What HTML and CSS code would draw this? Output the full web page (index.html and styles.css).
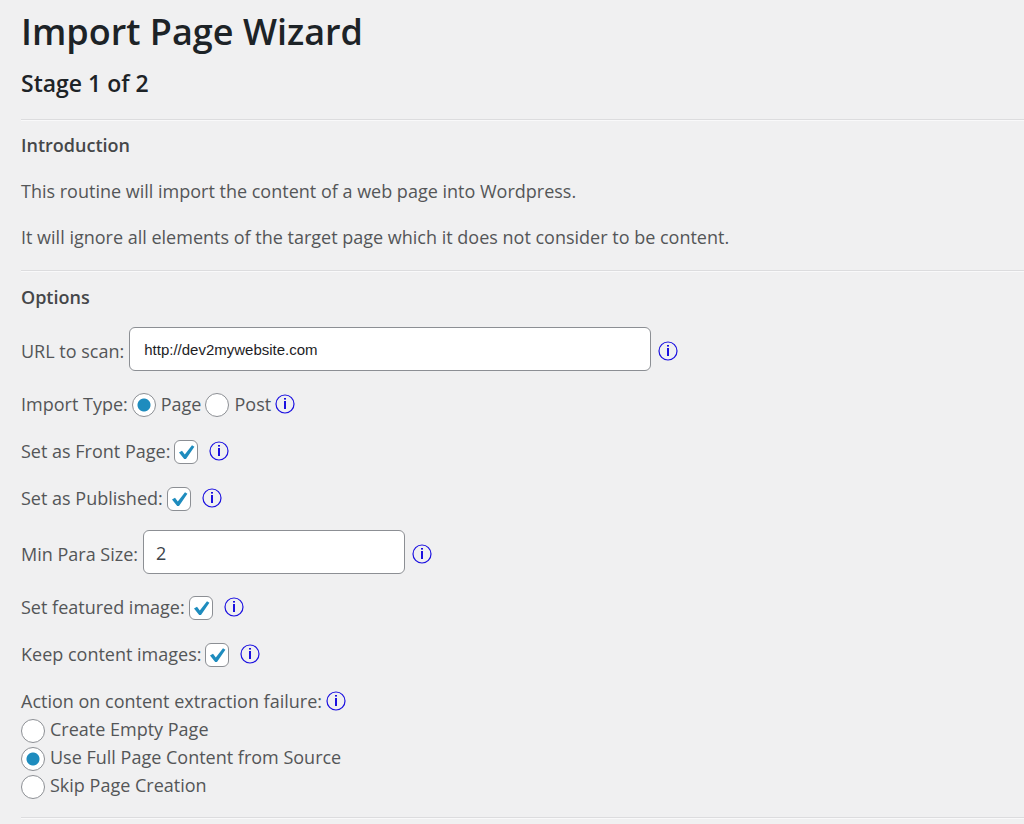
FILE: index.html
```html
<!DOCTYPE html>
<html lang="en">
<head>
<meta charset="utf-8">
<meta name="viewport" content="width=device-width, initial-scale=1">
<title>Import Page Wizard</title>
<link rel="stylesheet" href="styles.css">
</head>
<body>
<svg class="sprite" aria-hidden="true">
  <symbol id="info" viewBox="0 0 20 20">
    <circle cx="10" cy="10" r="9" fill="none" stroke="currentColor" stroke-width="1.2"/>
    <rect x="9" y="7" width="2" height="8" fill="currentColor"/>
    <rect x="9" y="4" width="2" height="1.6" fill="currentColor"/>
  </symbol>
  <symbol id="tick" viewBox="0 0 24 24">
    <path d="M5 12.6 8 10.8 10.8 14.6 18 5.2 20.4 6.8 12 19H10.2Z" fill="currentColor"/>
  </symbol>
</svg>
<main class="wizard">
  <h1 class="title">Import Page Wizard</h1>
  <h2 class="stage">Stage 1 of 2</h2>
  <hr class="rule">
  <section class="intro">
    <h3 class="heading">Introduction</h3>
    <p class="text">This routine will import the content of a web page into Wordpress.</p>
    <p class="text">It will ignore all elements of the target page which it does not consider to be content.</p>
  </section>
  <hr class="rule">
  <form class="options">
    <h3 class="heading">Options</h3>
    <div class="fields">
      <div class="row row-input">
        <label for="url">URL to scan:</label>
        <input class="input input-url" id="url" type="text" value="http://dev2mywebsite.com">
        <a class="info" href="#" aria-label="Help: URL to scan"><svg><use href="#info"/></svg></a>
      </div>
      <div class="row" role="radiogroup" aria-label="Import Type">
        <span>Import Type:</span>
        <label class="choice"><input class="radio" type="radio" name="type" checked>Page</label>
        <label class="choice"><input class="radio" type="radio" name="type">Post</label>
        <a class="info" href="#" aria-label="Help: Import Type"><svg><use href="#info"/></svg></a>
      </div>
      <div class="row row-check">
        <label for="front">Set as Front Page:</label>
        <span class="check"><input class="checkbox" id="front" type="checkbox" checked><svg class="tick"><use href="#tick"/></svg></span>
        <a class="info" href="#" aria-label="Help: Front Page"><svg><use href="#info"/></svg></a>
      </div>
      <div class="row row-check">
        <label for="published">Set as Published:</label>
        <span class="check"><input class="checkbox" id="published" type="checkbox" checked><svg class="tick"><use href="#tick"/></svg></span>
        <a class="info" href="#" aria-label="Help: Published"><svg><use href="#info"/></svg></a>
      </div>
      <div class="row row-input">
        <label for="para">Min Para Size:</label>
        <input class="input input-size" id="para" type="text" inputmode="numeric" value="2">
        <a class="info" href="#" aria-label="Help: Min Para Size"><svg><use href="#info"/></svg></a>
      </div>
      <div class="row row-check">
        <label for="featured">Set featured image:</label>
        <span class="check"><input class="checkbox" id="featured" type="checkbox" checked><svg class="tick"><use href="#tick"/></svg></span>
        <a class="info" href="#" aria-label="Help: featured image"><svg><use href="#info"/></svg></a>
      </div>
      <div class="row row-check">
        <label for="keep">Keep content images:</label>
        <span class="check"><input class="checkbox" id="keep" type="checkbox" checked><svg class="tick"><use href="#tick"/></svg></span>
        <a class="info" href="#" aria-label="Help: content images"><svg><use href="#info"/></svg></a>
      </div>
      <div class="failure" role="radiogroup" aria-label="Action on content extraction failure">
        <div class="row">
          <span>Action on content extraction failure:</span>
          <a class="info" href="#" aria-label="Help: extraction failure"><svg><use href="#info"/></svg></a>
        </div>
        <label class="choice"><input class="radio" type="radio" name="failure">Create Empty Page</label>
        <label class="choice"><input class="radio" type="radio" name="failure" checked>Use Full Page Content from Source</label>
        <label class="choice"><input class="radio" type="radio" name="failure">Skip Page Creation</label>
      </div>
    </div>
  </form>
  <hr class="rule">
</main>
</body>
</html>
```
FILE: styles.css
```css
* { box-sizing: border-box; }

body {
  margin: 0;
  background: #f0f0f1;
  color: #545658;
  font: 18px/28px "Open Sans", "Noto Sans", sans-serif;
}

.sprite { display: none; }
.wizard { padding: 8px 0 4px 21px; }

.title {
  margin: 0;
  color: #1d2327;
  font-size: 36px;
  font-weight: 600;
  line-height: 48px;
}

.stage {
  margin: 12px 0 20px;
  color: #1d2327;
  font-size: 23px;
  font-weight: 600;
  line-height: 31px;
}

.rule {
  height: 2px;
  margin: 0;
  border: 0;
  border-top: 1px solid #dcdcde;
  border-bottom: 1px solid #f9f9fa;
}

.heading {
  margin: 0;
  color: #454749;
  font-size: 18px;
  font-weight: 600;
}

.intro {
  display: grid;
  gap: 18px;
  padding: 10px 0 19px;
}

.text { margin: 0; }

.options {
  display: grid;
  gap: 16px;
  padding: 11px 0 18px;
}

.fields { display: grid; gap: 18px; }

.row {
  display: flex;
  align-items: center;
  gap: 4px;
  min-height: 29px;
}

.row-input { gap: 5px; }
.row-input label { padding-top: 4px; }
.row-input .info { margin: 4px 0 0 2px; }
.row-check .info { margin-left: 7px; }

.choice {
  display: flex;
  align-items: center;
  gap: 5px;
}

.failure .choice { min-height: 28px; }

.input {
  height: 44px;
  padding: 0 14px;
  border: 1px solid #8c8f94;
  border-radius: 6px;
  background: #fff;
}

.input-url {
  width: 522px;
  color: #1d1d1f;
  font: 15px "Liberation Sans", Arial, sans-serif;
}

.input-size {
  width: 262px;
  padding: 2px 12px 0;
  color: #3c434a;
  font: 18px "Open Sans", "Noto Sans", sans-serif;
}

.radio,
.checkbox {
  appearance: none;
  flex: none;
  width: 24px;
  height: 24px;
  margin: 0;
  border: 1px solid #8c8f94;
  background: #fff;
}

.radio {
  margin-top: 3px;
  border-radius: 50%;
}

.radio:checked {
  background: radial-gradient(circle, #1e8cbe 0 6px, #fff 7px);
}

.checkbox { display: block; border-radius: 6px; }

.check {
  position: relative;
  margin-top: 3px;
}

.tick {
  position: absolute;
  inset: 0;
  width: 24px;
  height: 24px;
  color: #1e8cbe;
  pointer-events: none;
  visibility: hidden;
}

.checkbox:checked + .tick { visibility: visible; }

.info {
  flex: none;
  width: 20px;
  height: 20px;
  color: #1b10e0;
}

.info svg { display: block; width: 20px; height: 20px; }
```
